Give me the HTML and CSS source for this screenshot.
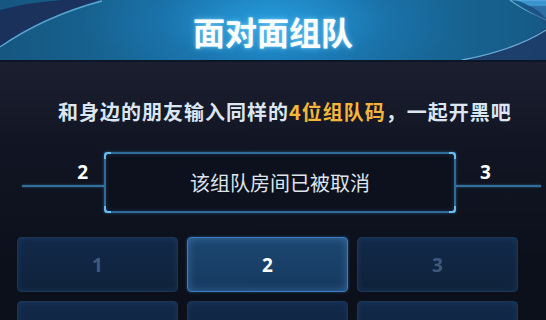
FILE: index.html
```html
<!DOCTYPE html>
<html lang="zh-CN">
<head>
<meta charset="utf-8">
<title>面对面组队</title>
<link rel="stylesheet" href="styles.css">
</head>
<body>
<div class="screen">
  <header class="header">
    <svg class="swoosh" viewBox="0 0 546 60" preserveAspectRatio="none" aria-hidden="true">
      <path d="M0 10 Q30 2 62 0 L100 0 Q40 18 0 46 Z" fill="#1b2d58" opacity="0.9"/>
      <path d="M0 47 Q45 16 102 1" stroke="#6db6e4" stroke-width="1.4" fill="none" opacity="0.8"/>
      <path d="M515 0 Q535 6 546 18 L546 0 Z" fill="#3f9ad6" opacity="0.9"/>
      <path d="M546 20 Q520 8 510 0 L546 0" fill="none" stroke="#7cc4ee" stroke-width="1.2" opacity="0.7"/>
      <path d="M546 28 Q520 48 466 60 L546 60 Z" fill="#1d3a66" opacity="0.85"/>
      <path d="M546 30 Q515 50 462 60" stroke="#7fc0ea" stroke-width="1.3" fill="none" opacity="0.8"/>
      <path d="M546 26 Q540 18 520 6 L546 6 Z" fill="#1f4a7c" opacity="0.5"/>
    </svg>
    <h1 class="title">面对面组队</h1>
  </header>

  <p class="hint">和身边的朋友输入同样的<span class="accent">4位组队码</span>，一起开黑吧</p>

  <div class="code-row">
    <div class="side side-left">
      <span class="side-label">2</span>
      <span class="side-line"></span>
    </div>
    <div class="msg-box">
      <span class="corner c-tl"></span>
      <span class="corner c-bl"></span>
      <span class="corner c-tr"></span>
      <span class="corner c-br"></span>
      <span class="msg-text">该组队房间已被取消</span>
    </div>
    <div class="side side-right">
      <span class="side-label">3</span>
      <span class="side-line"></span>
    </div>
  </div>

  <div class="keypad">
    <div class="key">1</div>
    <div class="key key-active">2</div>
    <div class="key">3</div>
    <div class="key"></div>
    <div class="key"></div>
    <div class="key"></div>
  </div>
</div>
</body>
</html>
```

FILE: styles.css
```css
* { box-sizing: border-box; }

html, body {
  margin: 0;
  padding: 0;
  width: 546px;
  height: 320px;
  overflow: hidden;
  background: #0c101b;
}

.screen {
  width: 546px;
  height: 320px;
  overflow: hidden;
  font-family: "Noto Sans CJK SC", "Noto Sans", sans-serif;
  background: linear-gradient(180deg, #24283b 0px, #1b1f30 60px, #121624 140px, #0c101b 260px);
}

.header {
  position: relative;
  height: 62px;
  border-bottom: 2px solid #0b1728;
  background:
    radial-gradient(ellipse 190px 70px at 273px 22px, rgba(40,160,225,0.85) 0%, rgba(30,130,200,0.35) 60%, rgba(30,120,190,0) 100%),
    linear-gradient(90deg, #165680 0%, #186a9a 30%, #1a7cb4 50%, #186a9a 70%, #165a86 100%);
  overflow: hidden;
}

.swoosh {
  position: absolute;
  left: 0;
  top: 0;
  width: 546px;
  height: 60px;
}

.title {
  position: relative;
  margin: 0;
  height: 60px;
  line-height: 62px;
  text-align: center;
  font-size: 32px;
  font-weight: 700;
  color: #ffffff;
  text-shadow: 0 0 6px rgba(120,210,255,0.7), 0 0 2px rgba(160,230,255,0.8);
}

.hint {
  margin: 38px 0 0 58px;
  height: 24px;
  line-height: 24px;
  font-size: 20px;
  font-weight: 700;
  letter-spacing: 1px;
  color: #dbe6f2;
  white-space: nowrap;
}

.accent {
  color: #f3b63a;
}

.code-row {
  display: flex;
  margin-top: 28px;
  height: 61px;
}

.side {
  display: flex;
  flex-direction: column;
  padding-top: 9px;
  gap: 2px;
}

.side-left {
  width: 104px;
  align-items: flex-end;
}

.side-right {
  width: 90px;
  align-items: flex-start;
}

.side-label {
  height: 22px;
  line-height: 22px;
  font-family: "Noto Sans", sans-serif;
  font-size: 19px;
  font-weight: 700;
  color: #ffffff;
}

.side-left .side-label { padding-right: 16px; }
.side-right .side-label { padding-left: 24px; }

.side-line {
  height: 2px;
  background: #2f6f9c;
  box-shadow: 0 0 2px rgba(80,160,220,0.6);
}

.side-left .side-line { width: 82px; }
.side-right .side-line { width: 85px; }

.msg-box {
  position: relative;
  width: 352px;
  height: 61px;
  border: 2px solid #2f6c98;
  border-radius: 2px;
  background: #0d111d;
  box-shadow: 0 0 3px rgba(70,150,210,0.5), inset 0 0 4px rgba(70,150,210,0.25);
  display: flex;
  align-items: center;
  justify-content: center;
}

.corner {
  position: absolute;
  width: 7px;
  height: 7px;
  border-color: #6cbcf0;
  border-style: solid;
  border-width: 0;
}

.c-tl { left: -2px; top: -2px; border-left-width: 2px; border-top-width: 2px; border-top-left-radius: 4px; }
.c-bl { left: -2px; bottom: -2px; border-left-width: 2px; border-bottom-width: 2px; border-bottom-left-radius: 4px; }
.c-tr { right: -2px; top: -2px; border-right-width: 2px; border-top-width: 2px; border-top-right-radius: 4px; }
.c-br { right: -2px; bottom: -2px; border-right-width: 2px; border-bottom-width: 2px; border-bottom-right-radius: 4px; }

.msg-text {
  font-size: 20px;
  color: #dfe4ec;
  line-height: 24px;
  margin-top: 1px;
}

.keypad {
  display: grid;
  grid-template-columns: repeat(3, 161px);
  grid-auto-rows: 55px;
  column-gap: 9px;
  row-gap: 9px;
  margin-top: 24px;
  padding-left: 17px;
}

.key {
  display: flex;
  align-items: center;
  justify-content: center;
  border-radius: 4px;
  border: 1px solid #1a3556;
  background: linear-gradient(180deg, #12294a 0%, #0f223a 100%);
  box-shadow: inset 0 0 6px rgba(60,120,180,0.2);
  font-family: "Noto Sans", sans-serif;
  font-size: 19px;
  font-weight: 700;
  color: #3d5a7e;
}

.key-active {
  border: 1px solid #3b7cc0;
  background: linear-gradient(180deg, #1c4670 0%, #163a60 100%);
  box-shadow: inset 0 0 8px rgba(90,160,230,0.45), 0 0 3px rgba(70,140,210,0.5);
  color: #ffffff;
}
```
